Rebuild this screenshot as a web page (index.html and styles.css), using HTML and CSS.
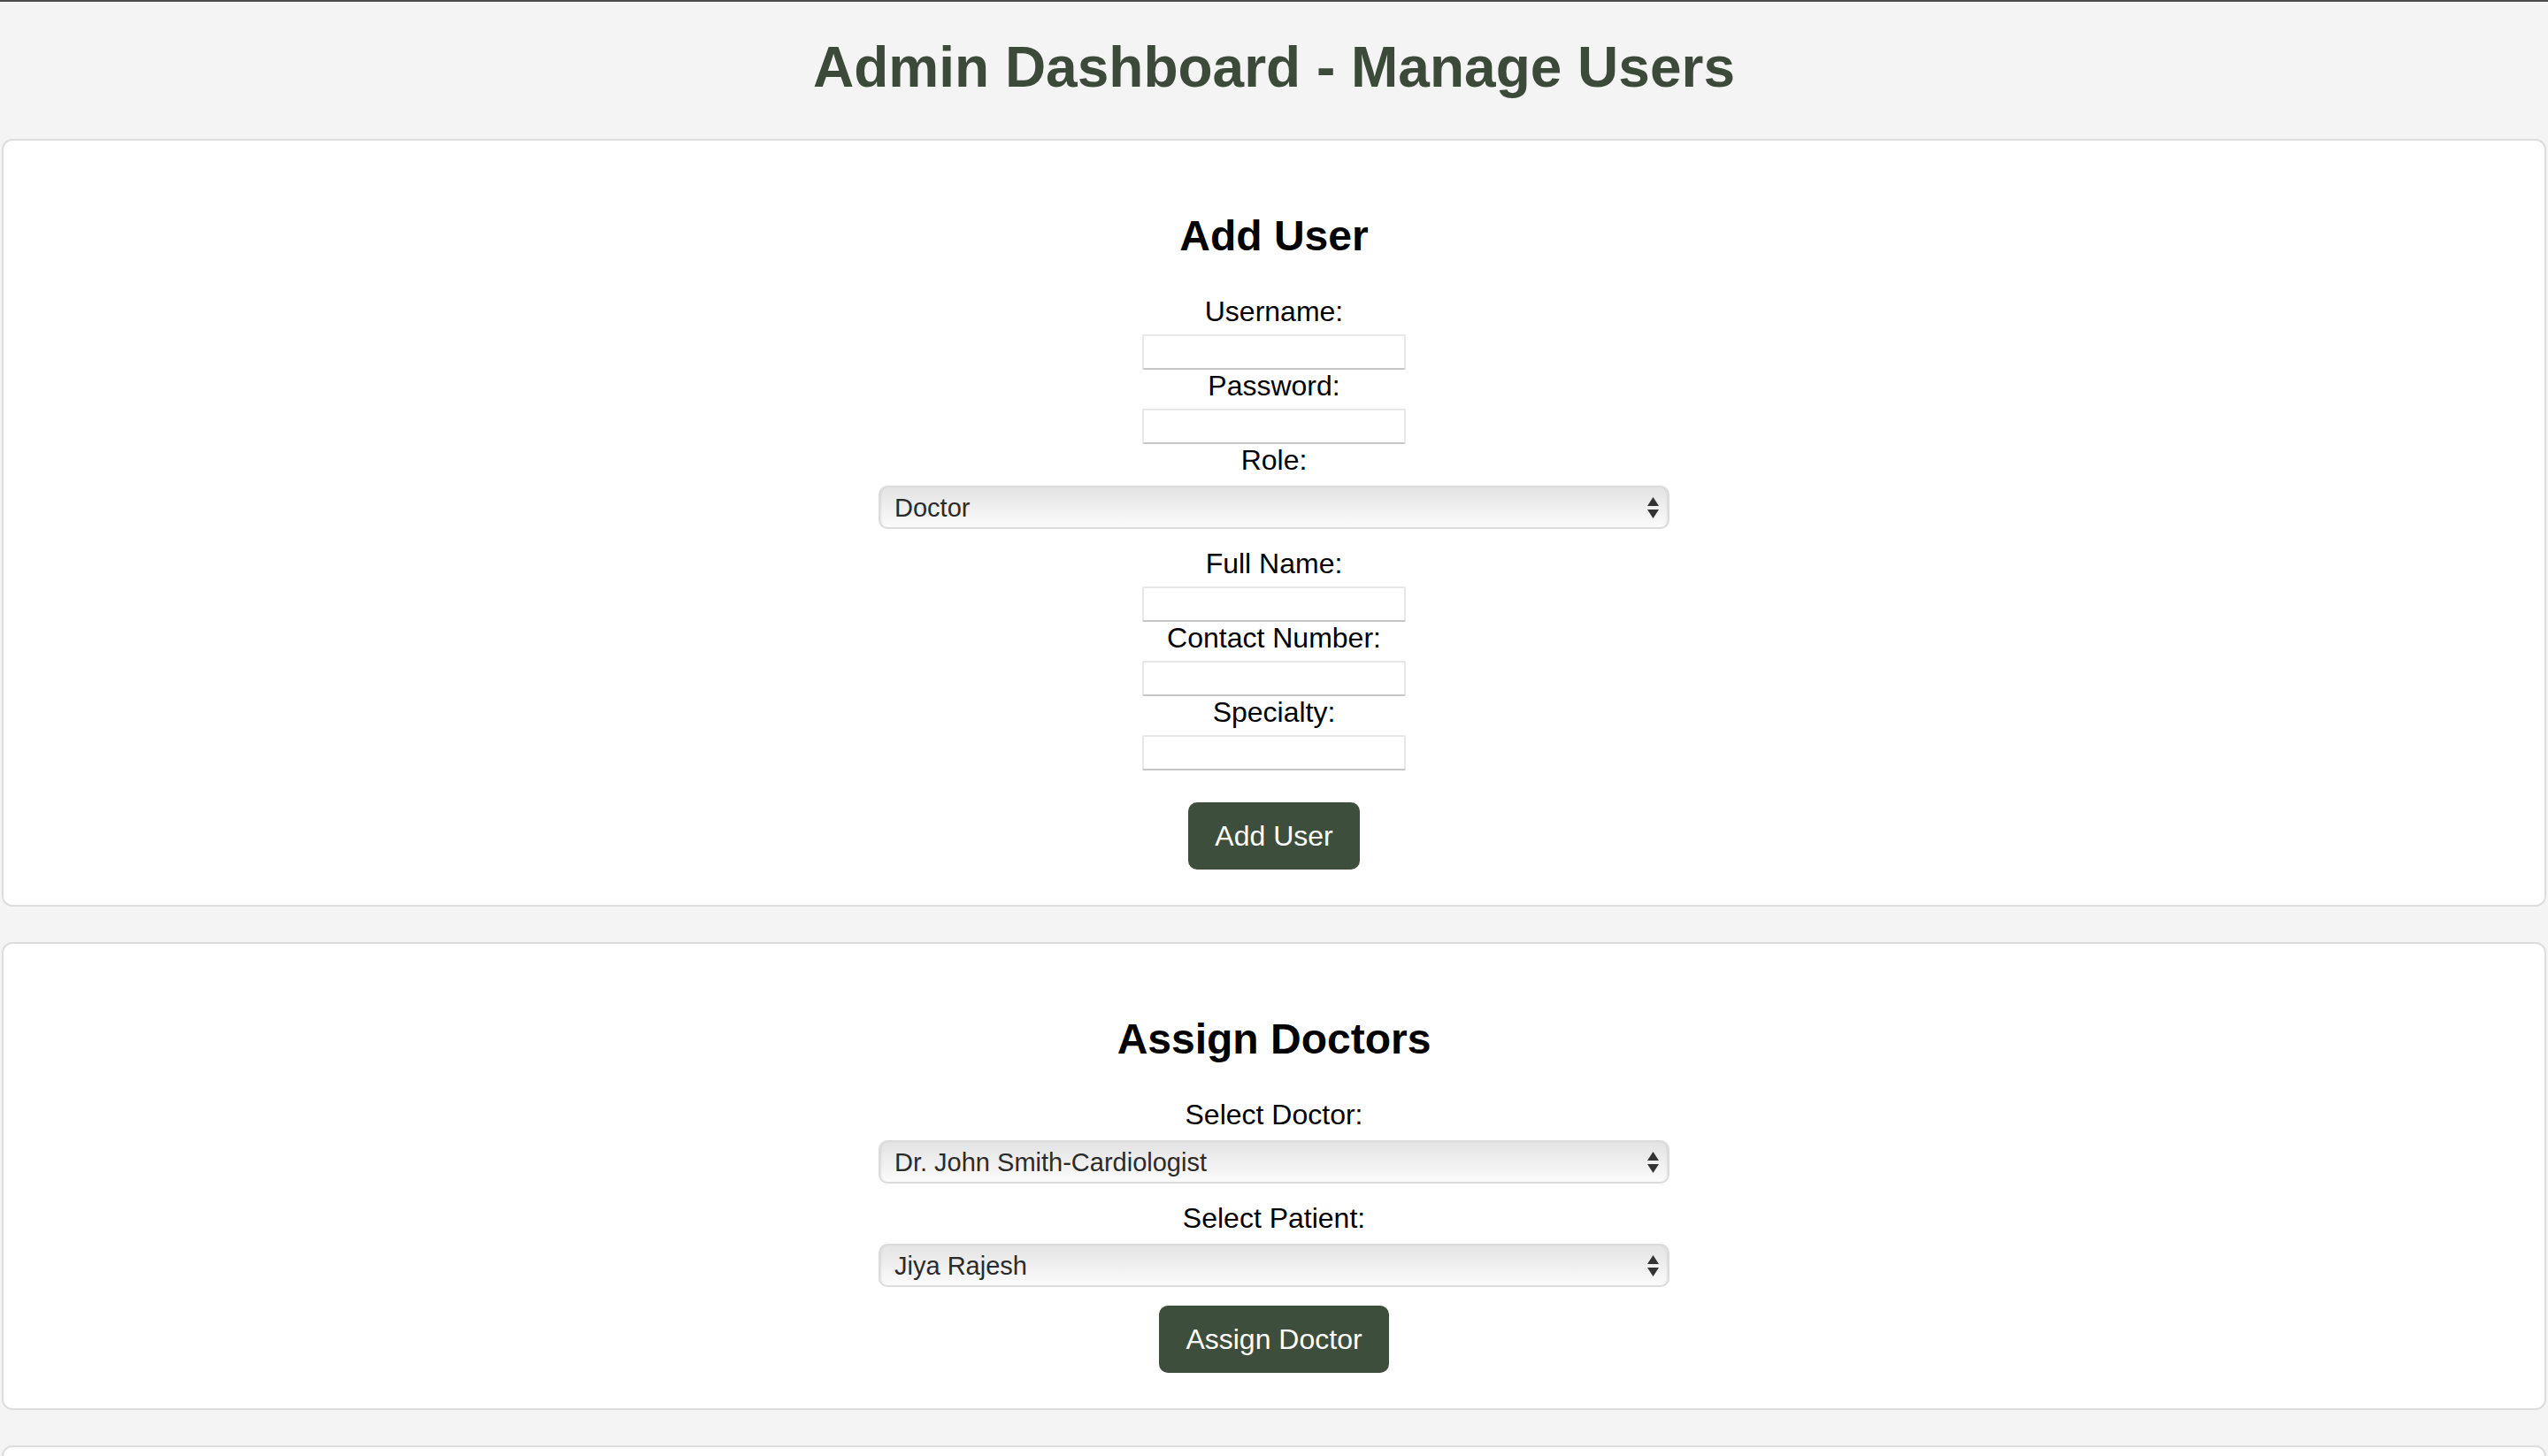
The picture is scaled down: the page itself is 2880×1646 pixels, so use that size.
FILE: index.html
```html
<!DOCTYPE html>
<html lang="en">
<head>
<meta charset="utf-8">
<title>Admin Dashboard - Manage Users</title>
<link rel="stylesheet" href="styles.css">
</head>
<body>
<header class="page-header">
  <h1 class="page-title">Admin Dashboard - Manage Users</h1>
</header>
<main class="content">
  <section class="card">
    <h2 class="card-title">Add User</h2>
    <form class="form">
      <label class="field-label" for="username">Username:</label>
      <input class="text-input" type="text" id="username">
      <label class="field-label" for="password">Password:</label>
      <input class="text-input" type="password" id="password">
      <label class="field-label" for="role">Role:</label>
      <div class="select-wrap">
        <select class="select" id="role">
          <option>Doctor</option>
          <option>Patient</option>
          <option>Admin</option>
        </select>
        <svg class="select-arrows" width="13" height="24" viewBox="0 0 13 24" aria-hidden="true"><path d="M6.5 0 L13 10 H0 Z M0 14 H13 L6.5 24 Z" fill="#333"/></svg>
      </div>
      <label class="field-label" for="fullname">Full Name:</label>
      <input class="text-input" type="text" id="fullname">
      <label class="field-label" for="contact">Contact Number:</label>
      <input class="text-input" type="text" id="contact">
      <label class="field-label" for="specialty">Specialty:</label>
      <input class="text-input text-input-last" type="text" id="specialty">
      <button class="btn" type="button">Add User</button>
    </form>
  </section>
  <section class="card">
    <h2 class="card-title">Assign Doctors</h2>
    <form class="form">
      <label class="field-label" for="doctor">Select Doctor:</label>
      <div class="select-wrap">
        <select class="select" id="doctor">
          <option>Dr. John Smith-Cardiologist</option>
        </select>
        <svg class="select-arrows" width="13" height="24" viewBox="0 0 13 24" aria-hidden="true"><path d="M6.5 0 L13 10 H0 Z M0 14 H13 L6.5 24 Z" fill="#333"/></svg>
      </div>
      <label class="field-label" for="patient">Select Patient:</label>
      <div class="select-wrap">
        <select class="select" id="patient">
          <option>Jiya Rajesh</option>
        </select>
        <svg class="select-arrows" width="13" height="24" viewBox="0 0 13 24" aria-hidden="true"><path d="M6.5 0 L13 10 H0 Z M0 14 H13 L6.5 24 Z" fill="#333"/></svg>
      </div>
      <button class="btn" type="button">Assign Doctor</button>
    </form>
  </section>
  <section class="card card-empty"></section>
</main>
</body>
</html>
```

FILE: styles.css
```css
html, body {
  margin: 0;
  padding: 0;
}

body {
  background: #f4f4f4;
  border-top: 2px solid #4a4a4a;
  font-family: "Liberation Sans", Arial, Helvetica, sans-serif;
  color: #000;
}

.page-header {
  text-align: center;
}

.page-title {
  margin: 37px 0 44px;
  font-size: 64px;
  font-weight: bold;
  color: #3c4b39;
}

.content {
  padding: 0 2px;
}

.card {
  background: #fff;
  border: 2px solid #dddddd;
  border-radius: 12px;
  padding: 40px;
  margin-bottom: 40px;
  text-align: center;
}

.card-empty {
  min-height: 200px;
  margin-bottom: 0;
}

.card-title {
  margin: 40px 0;
  font-size: 48px;
  font-weight: bold;
}

.form {
  max-width: 894px;
  margin: 0 auto;
}

.field-label {
  display: block;
  font-size: 32px;
}

.text-input {
  display: block;
  box-sizing: border-box;
  width: 298px;
  height: 40px;
  margin: 7px auto 0;
  padding: 2px 4px;
  border: 2px solid #e8e8e8;
  border-bottom-color: #c6c6c6;
  border-radius: 2px;
  background: #fff;
  font-size: 26px;
  font-family: inherit;
}

.text-input-last {
  margin-bottom: 36px;
}

.select-wrap {
  position: relative;
  margin: 10px 0 21px;
}

.select {
  display: block;
  box-sizing: border-box;
  width: 100%;
  height: 49px;
  -webkit-appearance: none;
  appearance: none;
  border: 2px solid #dcdcdc;
  border-radius: 10px;
  background: linear-gradient(to bottom, #e4e4e4 0%, #efefef 50%, #fbfbfb 100%);
  box-shadow: inset 2px 0 2px -1px rgba(0, 0, 0, 0.08), inset -2px 0 2px -1px rgba(0, 0, 0, 0.08);
  padding: 0 40px 0 16px;
  font-family: inherit;
  font-size: 29px;
  color: #2b2b2b;
}

.select-arrows {
  position: absolute;
  right: 12px;
  top: 50%;
  transform: translateY(-50%);
  pointer-events: none;
}

.btn {
  display: block;
  margin: 0 auto;
  padding: 20px 30px;
  border: none;
  border-radius: 10px;
  background: #3e4e3c;
  color: #fff;
  font-family: inherit;
  font-size: 32px;
  line-height: 36px;
}
```
